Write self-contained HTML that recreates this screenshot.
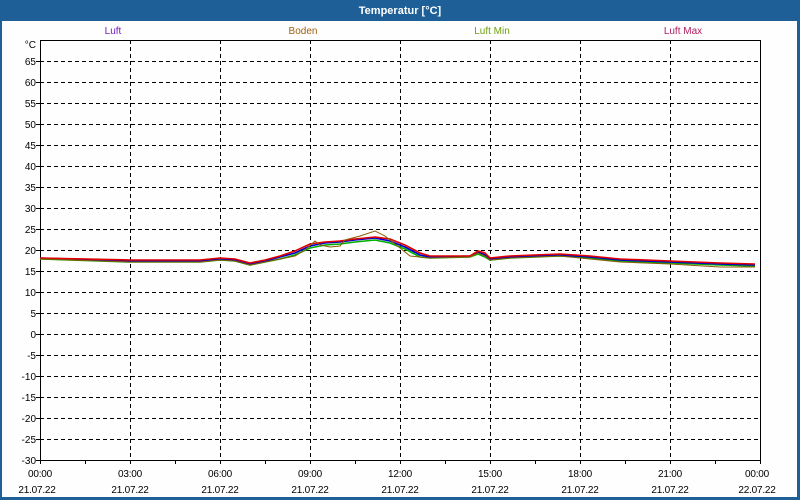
<!DOCTYPE html>
<html><head><meta charset="utf-8"><style>
body{margin:0;width:800px;height:500px;overflow:hidden;background:#1d5f96;font-family:"Liberation Sans",sans-serif}
</style></head><body>
<svg width="800" height="500" xmlns="http://www.w3.org/2000/svg" style="position:absolute;left:0;top:0">
<rect x="0" y="0" width="800" height="500" fill="#1d5f96"/>
<rect x="2" y="21" width="795" height="476" fill="#fdfefd"/>
<text x="400" y="14" fill="#fff" font-size="11" font-weight="bold" text-anchor="middle" font-family="Liberation Sans, sans-serif">Temperatur [°C]</text>
<g font-size="10" font-family="Liberation Sans, sans-serif" text-anchor="middle">
<text x="113" y="34" fill="#7a1ac0">Luft</text>
<text x="303" y="34" fill="#a06010">Boden</text>
<text x="492" y="34" fill="#70a010">Luft Min</text>
<text x="683" y="34" fill="#b02060">Luft Max</text>
</g>
<g stroke="#000" stroke-width="1" stroke-dasharray="4,3" shape-rendering="crispEdges">
<path d="M130.5 40V460M220.5 40V460M310.5 40V460M400.5 40V460M490.5 40V460M580.5 40V460M670.5 40V460"/>
<path d="M40 61.5H760M40 82.5H760M40 103.5H760M40 124.5H760M40 145.5H760M40 166.5H760M40 187.5H760M40 208.5H760M40 229.5H760M40 250.5H760M40 271.5H760M40 292.5H760M40 313.5H760M40 334.5H760M40 355.5H760M40 376.5H760M40 397.5H760M40 418.5H760M40 439.5H760"/>
</g>
<rect x="40.5" y="40.5" width="720" height="420" fill="none" stroke="#000" shape-rendering="crispEdges"/>
<g stroke="#000" shape-rendering="crispEdges"><path d="M40.5 460v4M85.5 460v4M130.5 460v4M175.5 460v4M220.5 460v4M265.5 460v4M310.5 460v4M355.5 460v4M400.5 460v4M445.5 460v4M490.5 460v4M535.5 460v4M580.5 460v4M625.5 460v4M670.5 460v4M715.5 460v4M760.5 460v4M36 61.5h4M36 82.5h4M36 103.5h4M36 124.5h4M36 145.5h4M36 166.5h4M36 187.5h4M36 208.5h4M36 229.5h4M36 250.5h4M36 271.5h4M36 292.5h4M36 313.5h4M36 334.5h4M36 355.5h4M36 376.5h4M36 397.5h4M36 418.5h4M36 439.5h4M36 460.5h4"/></g>
<g font-size="10" font-family="Liberation Sans, sans-serif" text-anchor="end" fill="#000">
<text x="36" y="48">°C</text>
<text x="36" y="65">65</text><text x="36" y="86">60</text><text x="36" y="107">55</text><text x="36" y="128">50</text><text x="36" y="149">45</text><text x="36" y="170">40</text><text x="36" y="191">35</text><text x="36" y="212">30</text><text x="36" y="233">25</text><text x="36" y="254">20</text><text x="36" y="275">15</text><text x="36" y="296">10</text><text x="36" y="317">5</text><text x="36" y="338">0</text><text x="36" y="359">-5</text><text x="36" y="380">-10</text><text x="36" y="401">-15</text><text x="36" y="422">-20</text><text x="36" y="443">-25</text><text x="36" y="464">-30</text>
</g>
<g font-size="10" font-family="Liberation Sans, sans-serif" text-anchor="middle" fill="#000" letter-spacing="-0.2">
<text x="40" y="477">00:00</text><text x="130" y="477">03:00</text><text x="220" y="477">06:00</text><text x="310" y="477">09:00</text><text x="400" y="477">12:00</text><text x="490" y="477">15:00</text><text x="580" y="477">18:00</text><text x="670" y="477">21:00</text><text x="757" y="477">00:00</text>
<text x="37" y="493">21.07.22</text><text x="130" y="493">21.07.22</text><text x="220" y="493">21.07.22</text><text x="310" y="493">21.07.22</text><text x="400" y="493">21.07.22</text><text x="490" y="493">21.07.22</text><text x="580" y="493">21.07.22</text><text x="670" y="493">21.07.22</text><text x="757" y="493">22.07.22</text>
</g>
<g fill="none" stroke-width="1.6">
<polyline stroke="#00b000" points="40,259 130,262 200,262 220,260 235,261 250,265 265,262 280,259 295,255 310,248 325,245 340,244 355,242 375,240 390,243 405,249 420,257 430,258 470,257 478,254 485,257 490,260 510,258 560,256 590,258 620,261 670,263 720,265 755,266"/>
<polyline stroke="#0000d0" points="40,258 130,261 200,261 220,259 235,260 250,264 265,261 280,257 295,253 310,246 325,243 340,242 355,240 375,238 390,241 405,247 420,255 430,257 470,256 478,252 485,255 490,259 510,257 560,255 590,257 620,260 670,262 720,264 755,265"/>
<polyline stroke="#e00000" points="40,258 130,260 200,260 220,258 235,259 250,263 265,260 280,256 295,251 310,244 325,242 340,241 355,239 375,237 390,239 405,245 420,253 430,256 470,256 478,251 485,253 490,258 510,256 560,254 590,256 620,259 670,261 720,263 755,264"/>
<polyline stroke="#8a5a00" stroke-width="1" points="40,259 130,262 200,262 220,260 235,261 250,265 265,262 280,259 295,256 305,250 315,241 320,245 330,247 340,246 345,240 360,236 375,231 385,236 395,244 410,256 430,258 470,257 478,253 485,256 490,260 510,258 560,256 590,259 620,262 670,264 720,267 755,267"/>
</g>
</svg>
</body></html>
